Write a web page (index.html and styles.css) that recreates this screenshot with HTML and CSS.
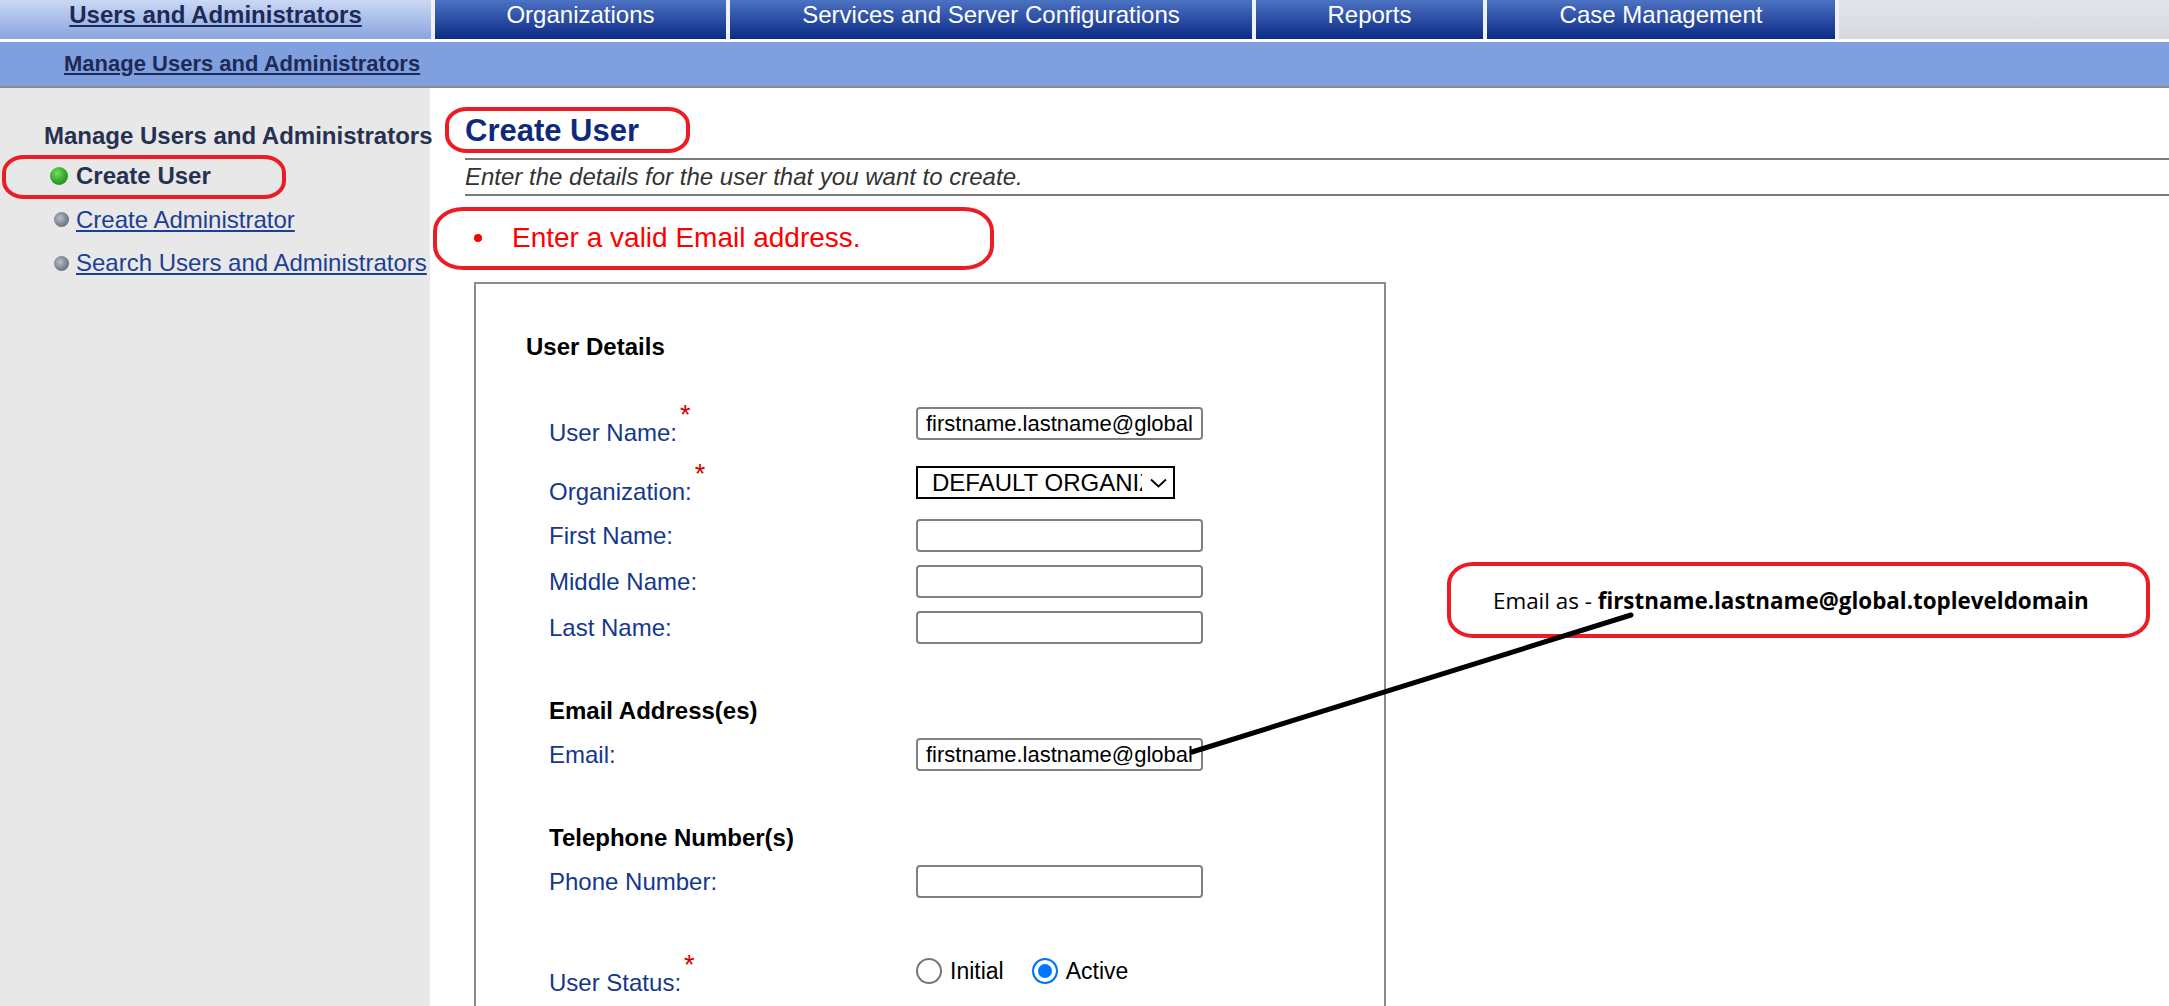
FILE: index.html
```html
<!DOCTYPE html>
<html lang="en">
<head>
    <meta charset="UTF-8">
    <title>Create User</title>
    <link rel="stylesheet" href="styles.css">
</head>
<body>

    <!-- Top tabs -->
    <nav class="topnav">
        <a href="#" class="tab tab-users active">Users and Administrators</a>
        <a href="#" class="tab tab-orgs">Organizations</a>
        <a href="#" class="tab tab-services">Services and Server Configurations</a>
        <a href="#" class="tab tab-reports">Reports</a>
        <a href="#" class="tab tab-cases">Case Management</a>
    </nav>
    <div class="subnav">
        <a href="#">Manage Users and Administrators</a>
    </div>

    <div class="layout">
        <!-- Left menu -->
        <aside class="sidebar">
            <h2 class="side-title">Manage Users and Administrators</h2>
            <ul class="side-menu">
                <li class="current"><span class="dot green"></span>Create User</li>
                <li><span class="dot"></span><a href="#">Create Administrator</a></li>
                <li><span class="dot"></span><a href="#">Search Users and Administrators</a></li>
            </ul>
        </aside>

        <!-- Page content -->
        <main class="main">
            <h1 class="page-title">Create User</h1>
            <p class="intro">Enter the details for the user that you want to create.</p>
            <ul class="errors">
                <li>Enter a valid Email address.</li>
            </ul>

            <div class="form-box">
                <h3 class="box-title">User Details</h3>
                <div class="fields">
                    <div class="row first">
                        <label class="lbl req">User Name:<span class="star">*</span></label>
                        <div class="field"><input type="text" value="firstname.lastname@global.topleveldomain"></div>
                    </div>
                    <div class="row org">
                        <label class="lbl req">Organization:<span class="star">*</span></label>
                        <div class="field">
                            <span class="select-wrap">
                                <select>
                                    <option>DEFAULT ORGANIZATION</option>
                                </select>
                                <svg class="chevron" width="17" height="10" viewBox="0 0 17 10"><path d="M1 1.5 L8.5 8.5 L16 1.5" fill="none" stroke="#000" stroke-width="1.8"/></svg>
                            </span>
                        </div>
                    </div>
                    <div class="row">
                        <label class="lbl">First Name:</label>
                        <div class="field"><input type="text"></div>
                    </div>
                    <div class="row">
                        <label class="lbl">Middle Name:</label>
                        <div class="field"><input type="text"></div>
                    </div>
                    <div class="row">
                        <label class="lbl">Last Name:</label>
                        <div class="field"><input type="text"></div>
                    </div>

                    <h4 class="section-title">Email Address(es)</h4>
                    <div class="row">
                        <label class="lbl">Email:</label>
                        <div class="field"><input type="text" value="firstname.lastname@global.topleveldomain"></div>
                    </div>

                    <h4 class="section-title">Telephone Number(s)</h4>
                    <div class="row">
                        <label class="lbl">Phone Number:</label>
                        <div class="field"><input type="text"></div>
                    </div>

                    <div class="row status">
                        <label class="lbl req">User Status:<span class="star">*</span></label>
                        <div class="field radios">
                            <label class="radio-opt"><input type="radio" name="status">Initial</label>
                            <label class="radio-opt"><input type="radio" name="status" checked>Active</label>
                        </div>
                    </div>
                </div>
            </div>
        </main>
    </div>

    <!-- Annotations drawn on top of the screenshot -->
    <div class="mark mark-side"></div>
    <div class="mark mark-title"></div>
    <div class="mark mark-error"></div>
    <div class="mark callout">Email as -&nbsp;<b>firstname.lastname@global.topleveldomain</b></div>
    <svg class="pointer" width="2169" height="1006">
        <line x1="1192" y1="752" x2="1631" y2="615" stroke="#000" stroke-width="5" stroke-linecap="round"/>
    </svg>

</body>
</html>
```

FILE: styles.css
```css
body {
    margin: 0;
    font-family: "Liberation Sans", Arial, sans-serif;
    background-color: #fff;
    position: relative;
    overflow: hidden;
}
.topnav {
    display: flex;
    height: 39px;
    background: linear-gradient(#e3e4e9, #d8d9de);
    border-bottom: 3px solid #fff;
}
.tab {
    box-sizing: border-box;
    height: 39px;
    border-right: 4px solid #eef1f8;
    text-align: center;
    font-size: 24px;
    line-height: 30px;
    color: #fff;
    text-decoration: none;
    background: linear-gradient(#4c72c3, #0b2a85);
}
.tab.active {
    background: linear-gradient(#cad8f4, #89a4de);
    color: #1d2956;
    font-weight: bold;
    text-decoration: underline;
}
.tab-users { width: 435px; }
.tab-orgs { width: 295px; }
.tab-services { width: 526px; }
.tab-reports { width: 231px; }
.tab-cases { width: 352px; }
.subnav {
    height: 44px;
    background-color: #7f9fdf;
    border-bottom: 2px solid #8b8b8b;
    padding-left: 64px;
}
.subnav a {
    font-size: 22px;
    font-weight: bold;
    line-height: 44px;
    color: #1d2956;
}
.layout {
    display: flex;
}
.sidebar {
    width: 430px;
    flex: none;
    box-sizing: border-box;
    min-height: 918px;
    padding-top: 34px;
    background-color: #e8e8e8;
}
.side-title {
    margin: 0 0 0 44px;
    font-size: 24px;
    line-height: 28px;
    white-space: nowrap;
    color: #263150;
}
.side-menu {
    list-style: none;
    margin: 12px 0 0;
    padding: 0 0 0 50px;
}
.side-menu li {
    display: flex;
    align-items: center;
    height: 28px;
    margin-bottom: 15.5px;
    font-size: 24px;
    white-space: nowrap;
}
.side-menu li.current {
    font-weight: bold;
    color: #263150;
}
.side-menu a {
    color: #1c3f94;
}
.dot {
    width: 15px;
    height: 15px;
    border-radius: 50%;
    margin: 0 7px 0 4px;
    background: radial-gradient(circle at 40% 40%, #b9bdc8, #6b7283 70%);
}
.dot.green {
    width: 18px;
    height: 18px;
    margin: 0 8px 0 0;
    background: radial-gradient(circle at 40% 35%, #72de5c, #2ea42a 55%, #1d6f1d);
}
.main {
    flex: 1;
    padding: 25px 0 40px 35px;
}
.page-title {
    margin: 0;
    font-size: 31px;
    line-height: 36px;
    color: #0e2b7b;
}
.intro {
    margin: 9px 0 0;
    border-top: 2px solid #7a7a7a;
    border-bottom: 2px solid #7a7a7a;
    font-style: italic;
    font-size: 24px;
    line-height: 34px;
    color: #333;
}
.errors {
    list-style: none;
    margin: 26px 0 0;
    padding: 0 0 0 9px;
}
.errors li {
    display: flex;
    align-items: center;
    font-size: 28px;
    line-height: 32px;
    color: #f00;
}
.errors li::before {
    content: "";
    width: 8px;
    height: 8px;
    border-radius: 50%;
    background-color: #f00;
    margin-right: 30px;
}
.form-box {
    width: 912px;
    box-sizing: border-box;
    margin: 28px 0 0 9px;
    padding: 49px 0 80px 50px;
    border: 2px solid #8c8c8c;
}
.box-title {
    margin: 0;
    font-size: 24px;
    line-height: 28px;
    color: #000;
}
.fields {
    margin-left: 23px;
}
.row {
    display: grid;
    grid-template-columns: 367px auto;
    align-items: start;
    margin-top: 13px;
}
.row.first { margin-top: 46px; }
.row.org { margin-top: 19px; }
.row.status { margin-top: 59px; }
.lbl {
    margin-top: 3px;
    font-size: 24px;
    line-height: 28px;
    color: #14388c;
}
.lbl.req {
    margin-top: 12px;
}
.star {
    position: relative;
    top: -17px;
    margin-left: 3px;
    font-size: 27px;
    line-height: 0;
    color: #d00000;
}
.section-title {
    margin: 53px 0 0;
    font-size: 24px;
    line-height: 28px;
    color: #000;
}
.field input[type="text"] {
    box-sizing: border-box;
    width: 287px;
    height: 33px;
    margin: 0;
    padding: 0 9px 0 8px;
    border: 2px solid #808080;
    border-radius: 4px;
    font-family: "Liberation Sans", Arial, sans-serif;
    font-size: 22px;
    color: #000;
}
.select-wrap {
    position: relative;
    display: inline-block;
}
.select-wrap select {
    box-sizing: border-box;
    width: 259px;
    height: 33px;
    margin: 0;
    padding: 0 31px 0 14px;
    border: 2px solid #000;
    border-radius: 0;
    appearance: none;
    -webkit-appearance: none;
    background-color: #fff;
    font-family: "Liberation Sans", Arial, sans-serif;
    font-size: 24px;
    color: #000;
}
.chevron {
    position: absolute;
    right: 8px;
    top: 12px;
}
.radios {
    display: flex;
    align-items: center;
    height: 28px;
}
.radio-opt {
    display: flex;
    align-items: center;
    margin-right: 28px;
    font-size: 23px;
    color: #000;
}
.radio-opt input {
    appearance: none;
    -webkit-appearance: none;
    width: 26px;
    height: 26px;
    margin: 0 8px 0 0;
    border: 2px solid #767676;
    border-radius: 50%;
    background-color: #fff;
}
.radio-opt input:checked {
    border-color: #0075ff;
    background-color: #0075ff;
    box-shadow: inset 0 0 0 4px #fff;
}
.row.status .lbl {
    margin-top: 12px;
}

/* red annotation marks */
.mark {
    position: absolute;
    box-sizing: border-box;
    border: 4px solid #ed1c24;
}
.mark-side {
    left: 2px;
    top: 155px;
    width: 284px;
    height: 44px;
    border-radius: 22px / 18px;
}
.mark-title {
    left: 445px;
    top: 107px;
    width: 245px;
    height: 46px;
    border-radius: 22px / 18px;
}
.mark-error {
    left: 433px;
    top: 207px;
    width: 561px;
    height: 63px;
    border-radius: 30px / 24px;
}
.callout {
    left: 1447px;
    top: 562px;
    width: 703px;
    height: 76px;
    border-radius: 26px / 22px;
    display: flex;
    align-items: center;
    padding-left: 42px;
    background-color: #fff;
    font-family: "Open Sans", sans-serif;
    font-size: 22.4px;
    white-space: nowrap;
    color: #000;
}
.callout b {
    font-weight: 700;
}
.pointer {
    position: absolute;
    left: 0;
    top: 0;
    pointer-events: none;
}
```
